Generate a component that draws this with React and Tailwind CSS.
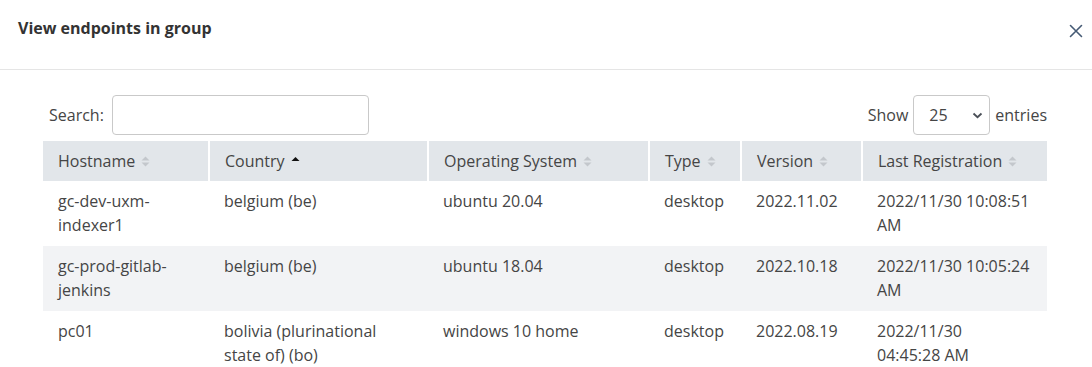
const columns = [
  { label: "Hostname", width: "w-[166px]", sort: "both" },
  { label: "Country", width: "w-[219px]", sort: "asc" },
  { label: "Operating System", width: "w-[221px]", sort: "both" },
  { label: "Type", width: "w-[92px]", sort: "both" },
  { label: "Version", width: "w-[121px]", sort: "both" },
  { label: "Last Registration", width: "w-[185px]", sort: "both" },
];

// each cell is a list of its wrapped lines, as they appear in the screenshot
const rows = [
  [["gc-dev-uxm-", "indexer1"], ["belgium (be)"], ["ubuntu 20.04"], ["desktop"], ["2022.11.02"], ["2022/11/30 10:08:51", "AM"]],
  [["gc-prod-gitlab-", "jenkins"], ["belgium (be)"], ["ubuntu 18.04"], ["desktop"], ["2022.10.18"], ["2022/11/30 10:05:24", "AM"]],
  [["pc01"], ["bolivia (plurinational", "state of) (bo)"], ["windows 10 home"], ["desktop"], ["2022.08.19"], ["2022/11/30", "04:45:28 AM"]],
];

function SortIcon({ dir }) {
  if (dir === "asc") {
    return (
      <svg width="9" height="10" viewBox="0 0 9 10" className="ml-[6px] shrink-0">
        <path d="M0.5 5 L4.5 1 L8.5 5 Z" fill="#111" />
      </svg>
    );
  }
  return (
    <svg width="9" height="13" viewBox="0 0 9 13" className="ml-[6px] shrink-0">
      <path d="M0.5 5.5 L4.5 1.5 L8.5 5.5 Z" fill="#c3c7cc" />
      <path d="M0.5 7.5 L4.5 11.5 L8.5 7.5 Z" fill="#c3c7cc" />
    </svg>
  );
}

export default function App() {
  return (
    <div className="w-[1092px] h-[367px] overflow-hidden bg-white text-[#454545] font-['Open_Sans',sans-serif]">
      <div className="h-[70px] border-b border-[#e5e5e5] flex items-start justify-between pl-[18px] pr-[8px]">
        <h1 className="pt-[16px] text-[16px] leading-6 font-bold text-[#333]">View endpoints in group</h1>
        <button className="mt-[23px] w-[16px] h-[16px] flex items-center justify-center">
          <svg width="14" height="14" viewBox="0 0 14 14">
            <path d="M1.5 1.5 L12.5 12.5 M12.5 1.5 L1.5 12.5" stroke="#455a74" strokeWidth="1.6" strokeLinecap="round" />
          </svg>
        </button>
      </div>

      <div className="pl-[43px] pr-[45px]">
        <div className="mt-[25px] flex items-center justify-between pl-[6px]">
          <label className="flex items-center gap-[8px] text-[16px]">
            Search:
            <input className="w-[257px] h-[40px] border border-[#c9c9c9] rounded-[4px] px-2 outline-none" />
          </label>
          <div className="flex items-center gap-[5px] text-[16px]">
            Show
            <div className="w-[77px] h-[40px] border border-[#c9c9c9] rounded-[4px] flex items-center justify-between pl-[15px] pr-[6px]">
              <span>25</span>
              <svg width="11" height="7" viewBox="0 0 11 7">
                <path d="M1.5 1.5 L5.5 5.2 L9.5 1.5" stroke="#4a4f57" strokeWidth="1.8" fill="none" />
              </svg>
            </div>
            entries
          </div>
        </div>

        <table className="mt-[6px] w-[1004px] table-fixed border-collapse text-[16px]">
          <colgroup>
            {columns.map((c) => (
              <col key={c.label} className={c.width} />
            ))}
          </colgroup>
          <thead>
            <tr className="bg-[#e2e6ea]">
              {columns.map((c, i) => (
                <th
                  key={c.label}
                  className={`h-[40px] px-[15px] text-left font-normal text-[#454545] ${i > 0 ? "border-l-2 border-white" : ""}`}
                >
                  <span className="flex items-center whitespace-nowrap">
                    {c.label}
                    <SortIcon dir={c.sort} />
                  </span>
                </th>
              ))}
            </tr>
          </thead>
          <tbody>
            {rows.map((r, ri) => (
              <tr key={ri} className={ri % 2 === 1 ? "bg-[#f2f3f5]" : "bg-white"}>
                {r.map((lines, ci) => (
                  <td key={ci} className="align-top px-[15px] pt-[8px] pb-[9px] leading-6 whitespace-nowrap">
                    {lines.map((line, li) => (
                      <div key={li}>{line}</div>
                    ))}
                  </td>
                ))}
              </tr>
            ))}
          </tbody>
        </table>
      </div>
    </div>
  );
}
